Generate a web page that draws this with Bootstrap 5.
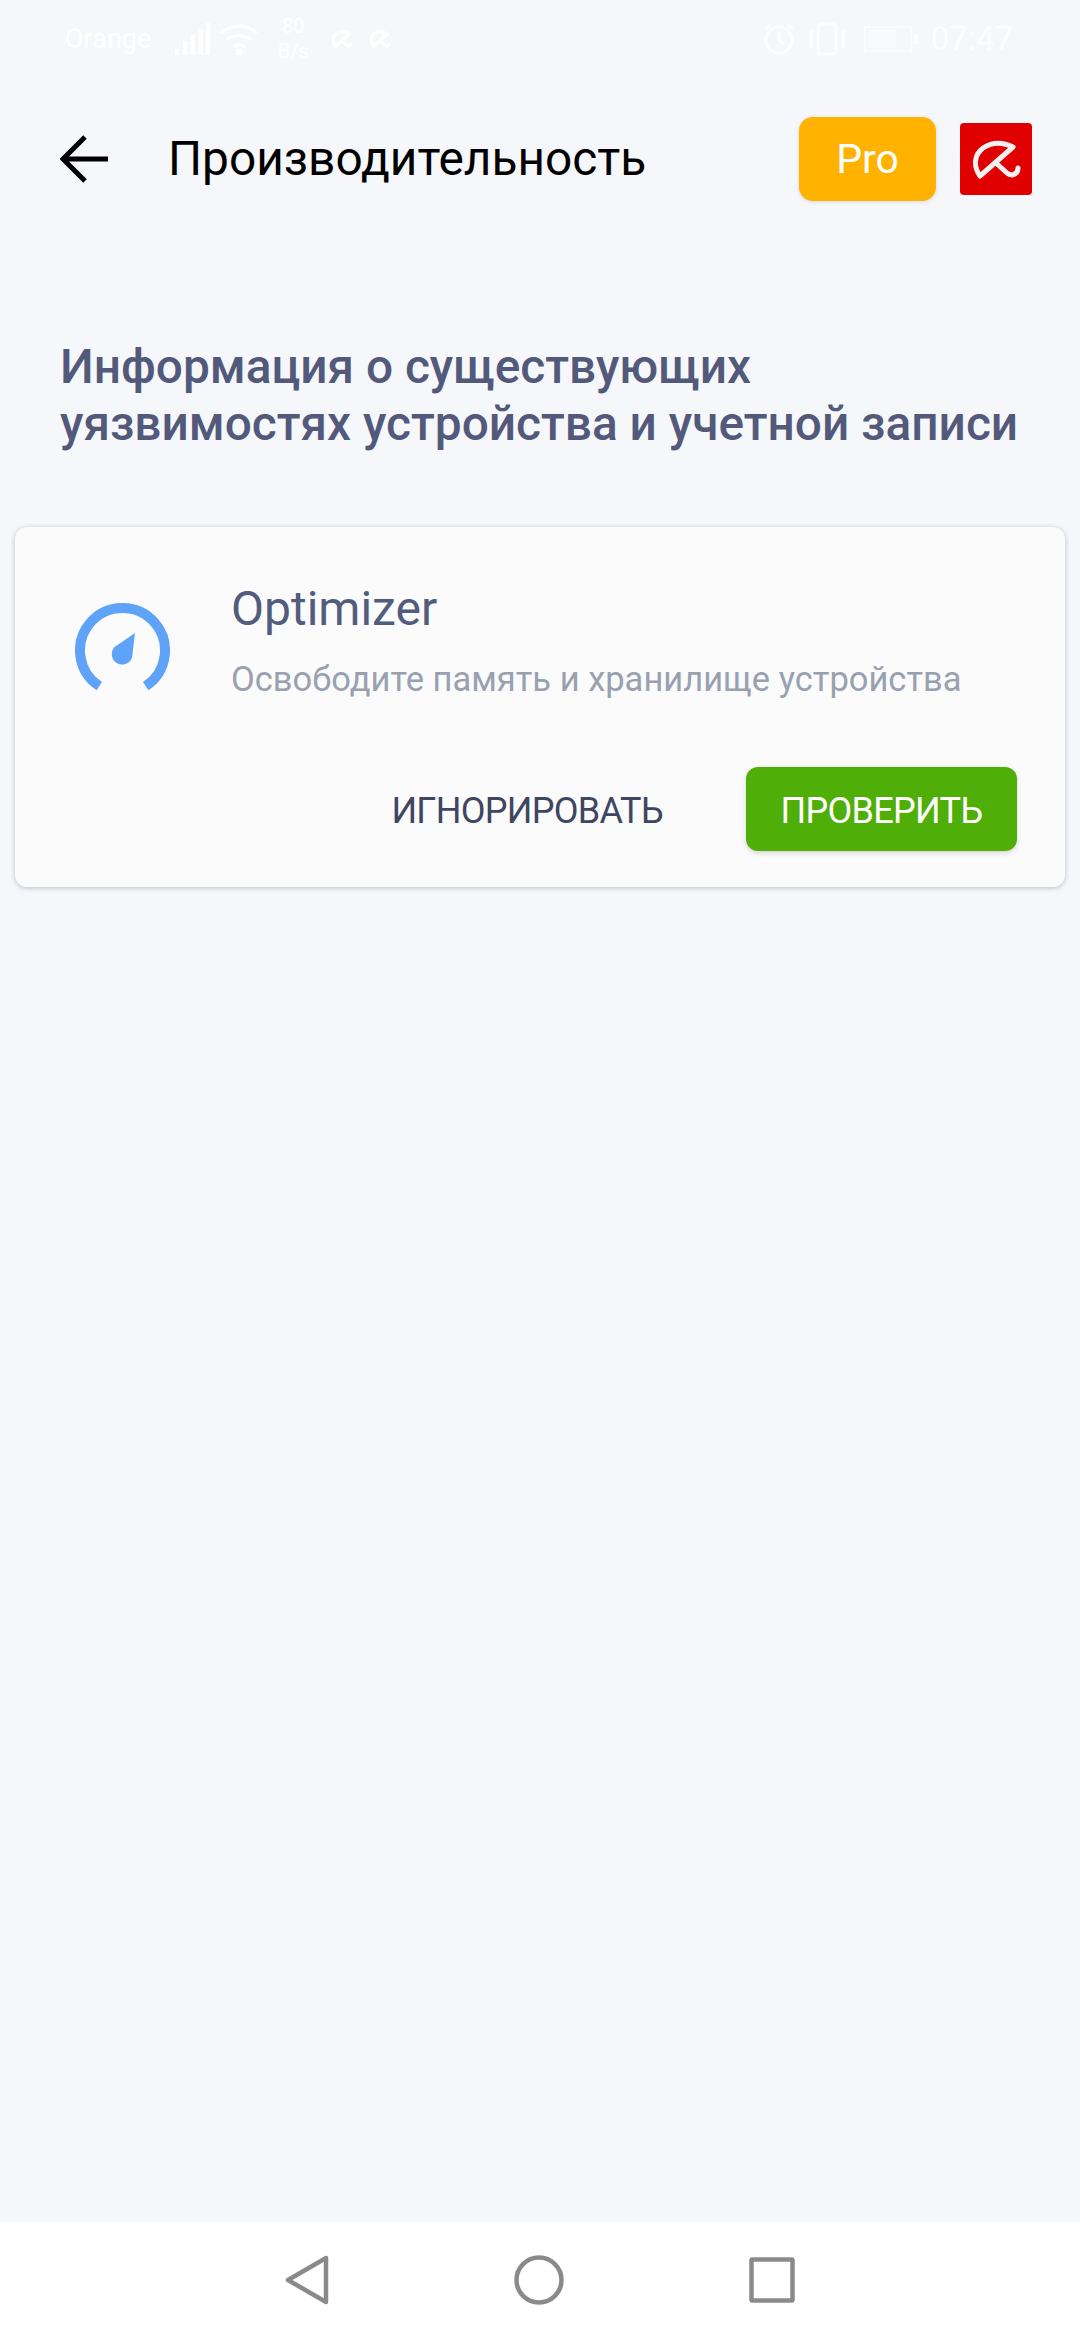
<!DOCTYPE html>
<html lang="ru">
<head>
    <meta charset="UTF-8">
    <title>Производительность</title>
    <link href="https://cdn.jsdelivr.net/npm/bootstrap@5.3.0/dist/css/bootstrap.min.css" rel="stylesheet">
    <style>
        body {
            background-color: #f5f7fa;
            font-family: Roboto, "Liberation Sans", sans-serif;
        }
        .screen {
            width: 1080px;
            height: 2340px;
        }
        .status-row {
            height: 78px;
            padding: 0 67px 0 65px;
            color: #fff;
            font-size: 27px;
        }
        .status-speed {
            font-size: 20px;
            line-height: 25px;
            width: 36px;
        }
        .status-time {
            font-size: 33px;
            opacity: .8;
        }
        .status-right {
            gap: 12px;
        }
        .status-right svg {
            opacity: .75;
        }
        .top-row {
            height: 162px;
            padding: 0 48px 0 60px;
        }
        .top-title {
            font-size: 47.800px;
            color: #000;
            margin-left: 60px;
            padding-top: 2px;
        }
        .pro-btn {
            width: 137px;
            height: 84px;
            padding-top: 2px;
            background-color: #ffb200;
            color: #fff;
            font-size: 41px;
            border-radius: 14px;
            box-shadow: 0 1px 4px rgba(0, 0, 0, .12);
            margin-right: 24px;
        }
        .brand-box {
            width: 72px;
            height: 72px;
            background-color: #e00000;
            border-radius: 4px;
        }
        .info-title {
            font-size: 47.800px;
            font-weight: 500;
            line-height: 57px;
            color: #53597b;
            margin: 99px 0 74px 60px;
        }
        .issue-card {
            height: 360px;
            margin: 0 15px;
            background-color: #fbfbfc;
            border: 0;
            border-radius: 12px;
            box-shadow: 0 1px 5px rgba(60, 70, 90, .32);
        }
        .issue-icon {
            width: 96px;
            margin: 76px 60px 0 60px;
        }
        .issue-name {
            font-size: 48px;
            line-height: 54px;
            color: #525c7d;
            margin-top: 55px;
        }
        .issue-text {
            font-size: 34.500px;
            line-height: 42px;
            color: #99a1b0;
            margin-top: 22px;
        }
        .issue-actions {
            padding: 0 48px 36px 0;
        }
        .skip-btn {
            font-size: 36px;
            letter-spacing: -.7px;
            color: #3f4662;
            margin-right: 83px;
            padding-top: 3px;
        }
        .check-btn {
            width: 271px;
            height: 84px;
            padding-top: 3px;
            background-color: #4fae08;
            color: #fff;
            font-size: 36px;
            letter-spacing: -.7px;
            border-radius: 12px;
            box-shadow: 0 2px 5px rgba(0, 0, 0, .16);
        }
        .bottom-nav {
            height: 118px;
            background-color: #fff;
            padding-bottom: 2px;
        }
        .nav-icons {
            gap: 185px;
        }
    </style>
</head>
<body>

<div class="screen d-flex flex-column">
    <!-- Строка состояния -->
    <div class="status-row d-flex align-items-center justify-content-between">
        <div class="d-flex align-items-center">
            <span>Orange</span>
            <svg class="ms-4" width="36" height="36" viewBox="0 0 36 36" fill="#fff"><rect x="0" y="28" width="4" height="6"/><rect x="8" y="20" width="4" height="14"/><rect x="16" y="14" width="4" height="20"/><rect x="24" y="8" width="4" height="26"/><rect x="31" y="2" width="4" height="32"/></svg>
            <svg class="ms-2" width="40" height="34" viewBox="0 0 40 34" fill="none" stroke="#fff" stroke-width="3"><path d="M2 11c10-9 26-9 36 0M8 18c7-6 17-6 24 0M14 25c4-3 8-3 12 0"/><circle cx="20" cy="30" r="2" fill="#fff"/></svg>
            <div class="status-speed text-center ms-3">80<br>B/s</div>
            <svg class="ms-3" width="30" height="30" viewBox="0 0 72 72" fill="none" stroke="#fff" stroke-width="8"><path d="M20 54C12 42 14 28 24 22c9-4 20-3 29 2L20 54ZM36 40l12 11c4 3 10 0 10-6"/></svg>
            <svg class="ms-2" width="30" height="30" viewBox="0 0 72 72" fill="none" stroke="#fff" stroke-width="8"><path d="M20 54C12 42 14 28 24 22c9-4 20-3 29 2L20 54ZM36 40l12 11c4 3 10 0 10-6"/></svg>
        </div>
        <div class="status-right d-flex align-items-center">
            <svg width="32" height="34" viewBox="0 0 32 34" fill="none" stroke="#fff" stroke-width="3"><circle cx="16" cy="18" r="13"/><path d="M16 10v8l5 4M2 7l6-5M30 7l-6-5"/></svg>
            <svg class="me-1" width="40" height="34" viewBox="0 0 40 34" fill="none" stroke="#fff" stroke-width="3"><rect x="11" y="2" width="18" height="30" rx="3"/><path d="M4 8v18M36 8v18"/></svg>
            <svg width="56" height="28" viewBox="0 0 56 28" fill="#fff"><rect x="1.500" y="2" width="47" height="24" fill="none" stroke="#fff" stroke-width="1.500"/><rect x="5" y="5" width="28" height="18" opacity=".5"/><rect x="51" y="9" width="4" height="10"/></svg>
            <span class="status-time">07:47</span>
        </div>
    </div>

    <!-- Шапка -->
    <div class="top-row d-flex align-items-center">
        <svg width="48" height="48" viewBox="0 0 48 48" fill="none" stroke="#000" stroke-width="5"><path d="M48 24H4M25 2 3 24l22 22"/></svg>
        <div class="top-title flex-grow-1">Производительность</div>
        <div class="pro-btn d-flex align-items-center justify-content-center">Pro</div>
        <div class="brand-box">
            <svg width="72" height="72" viewBox="0 0 72 72" fill="none" stroke="#f6f0f0" stroke-width="5" stroke-linecap="round" stroke-linejoin="round"><path d="M20 53C13 43 14 32 23 25c9-6 20-6 30-1L20 53ZM36 40l11 10c5 4 11 1 11-5"/></svg>
        </div>
    </div>

    <div class="flex-grow-1">
        <h1 class="info-title">Информация о существующих<br>уязвимостях устройства и учетной записи</h1>

        <div class="card issue-card">
            <div class="d-flex">
                <div class="issue-icon">
                    <svg width="96" height="90" viewBox="0 0 96 90"><path d="M24.300 83.100A42.500 42.500 0 1 1 70.700 83.100" fill="none" stroke="#5ea3f8" stroke-width="10"/><path d="M60 30 39.500 44a10.500 10.500 0 1 0 17.500 11Z" fill="#5ea3f8"/></svg>
                </div>
                <div>
                    <div class="issue-name">Optimizer</div>
                    <div class="issue-text">Освободите память и хранилище устройства</div>
                </div>
            </div>
            <div class="issue-actions d-flex align-items-center justify-content-end mt-auto">
                <div class="skip-btn">ИГНОРИРОВАТЬ</div>
                <div class="check-btn d-flex align-items-center justify-content-center">ПРОВЕРИТЬ</div>
            </div>
        </div>
    </div>

    <!-- Навигация -->
    <div class="bottom-nav d-flex align-items-center justify-content-center">
        <div class="nav-icons d-flex align-items-center">
            <svg width="44" height="50" viewBox="0 0 44 50" fill="none" stroke="#8a8a8a" stroke-width="4.500" stroke-linejoin="round"><path d="M41 3v44L3 25Z"/></svg>
            <svg width="50" height="50" viewBox="0 0 50 50" fill="none" stroke="#8a8a8a" stroke-width="4.500"><circle cx="25" cy="25" r="22.500"/></svg>
            <svg width="46" height="46" viewBox="0 0 46 46" fill="none" stroke="#8a8a8a" stroke-width="4.500" stroke-linejoin="round"><rect x="2.500" y="2.500" width="41" height="41" rx="1"/></svg>
        </div>
    </div>
</div>

<script src="https://cdn.jsdelivr.net/npm/bootstrap@5.3.0/dist/js/bootstrap.bundle.min.js"></script>
</body>
</html>
